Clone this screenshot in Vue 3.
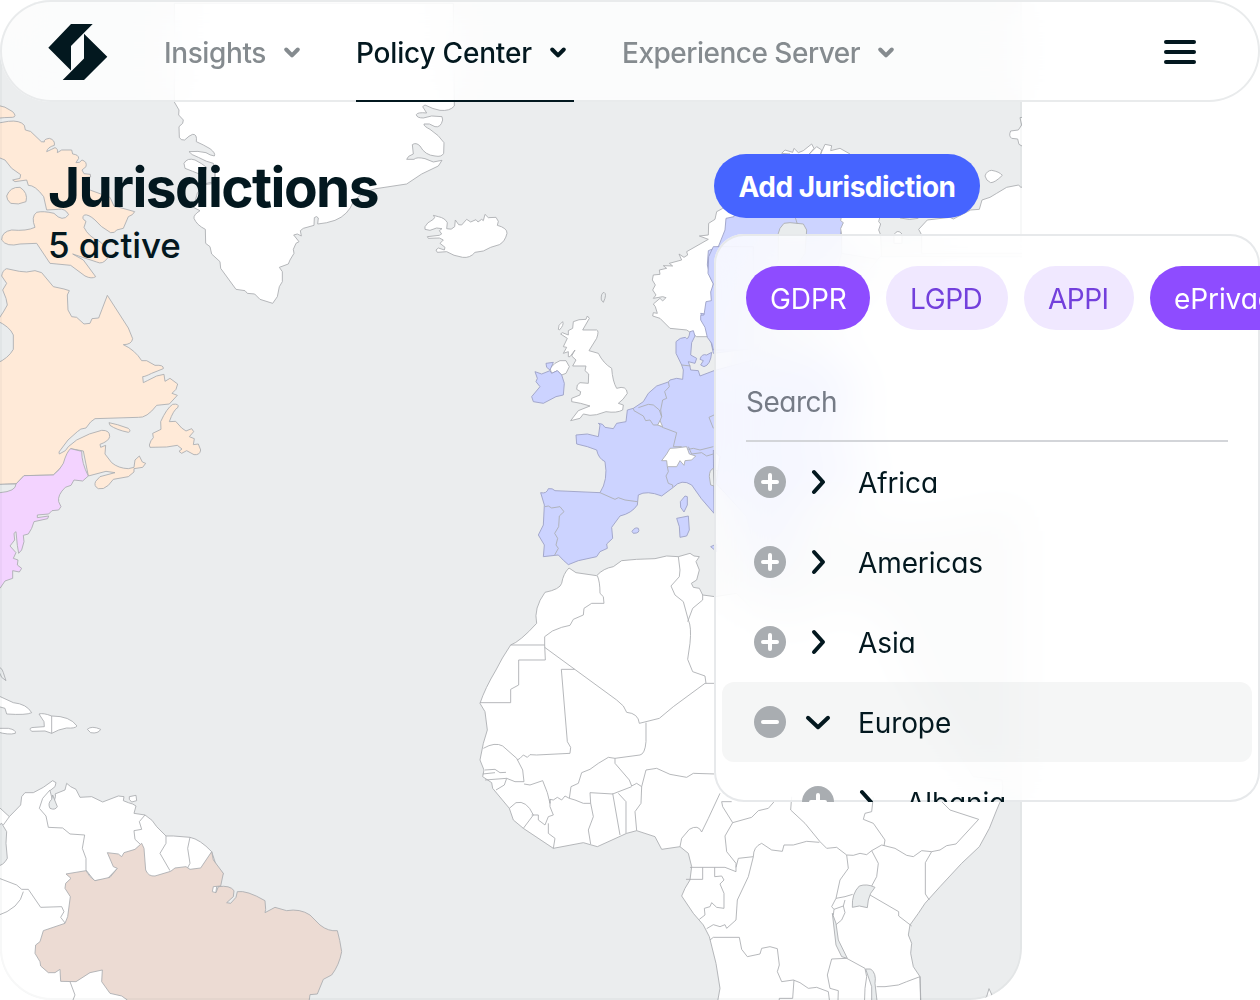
<script setup>
const navItems = [
  { label: 'Insights', key: 'insights' },
  { label: 'Policy Center', key: 'policy', active: true },
  { label: 'Experience Server', key: 'experience' },
]

const tags = [
  { label: 'GDPR', key: 'gdpr', selected: true },
  { label: 'LGPD', key: 'lgpd' },
  { label: 'APPI', key: 'appi' },
  { label: 'ePrivacy', key: 'eprivacy', selected: true },
]

const regions = [
  { label: 'Africa' },
  { label: 'Americas' },
  { label: 'Asia' },
  { label: 'Europe', open: true },
  { label: 'Albania', nested: true },
]

// Map sheets: each has its own origin and is drawn at three units per pixel.
const sheets = [
  {
    key: 'greenland', x: 160, y: 100,
    shapes: [
      ['land', 'M43 -50V6L57 30 56 45 70 60 68 70 57 80 58 112Q62 122 74 120Q88 106 98 103Q112 102 109 125Q130 134 150 146Q168 160 163 168Q150 166 138 158Q115 152 87 155Q92 164 115 172Q140 186 160 190L165 205V245L130 252 112 280 100 322 120 332Q100 345 102 355Q110 375 136 388L137 430 150 440 155 462 180 485 182 505 228 568 255 572 262 580 284 582 300 598 338 610 352 590 358 560 367 545 367 515 358 502 385 492 390 480 402 460 400 448 408 430 417 425 401 405 412 402 424 408 421 392 430 385 462 376 463 353Q470 346 475 354L473 372Q500 370 525 361Q565 345 580 305Q605 275 648 266L740 252 785 222 835 198 846 181 820 186 795 176Q770 170 762 178L740 178Q742 168 760 162L757 134Q768 126 780 138Q795 166 825 168Q845 172 851 160L852 128Q838 106 810 88Q790 78 792 72Q808 68 825 80Q842 84 848 60L846 50 815 48 790 54Q770 54 769 44Q772 36 800 39L788 20 795 15Q820 28 840 31Q870 34 883 18L880 -290H43Z'],
      ['land', 'M72 190Q82 172 105 180Q125 190 140 202Q135 224 118 222Q98 214 75 205Z'],
      ['line', 'M165 205V250L130 254'],
      ['land', 'M795 380Q800 368 820 358Q828 352 820 346L835 350Q855 354 862 368L860 386Q875 392 884 380L886 360 896 374 905 375 920 358 932 366 948 359 954 366 965 358 970 362 975 343 985 353 1008 352 1015 364 1012 376Q1042 384 1041 400Q1035 425 1018 434L992 442 970 453 945 457Q930 475 908 472Q880 468 860 455L832 457 828 450 835 444 853 450 855 442 840 430 850 420 838 414 805 415 802 410 838 406 845 402 838 392 846 386 830 384 810 391 795 388Z'],
    ],
  },
  {
    key: 'arctic', x: 0, y: 0,
    shapes: [
      ['canada', 'M-10 315Q15 318 38 335Q52 350 38 352Q15 352 -10 355Z'],
      ['canada', 'M-10 370L25 364Q60 360 73 376L76 390Q95 392 102 404L124 425 133 426Q130 418 148 415Q166 420 163 436Q142 442 140 455Q155 448 165 443Q175 446 172 458L185 450 215 450 218 462Q236 464 236 475L228 488Q240 490 246 480Q262 485 258 500L246 510 252 521 271 523 272 531 250 533 248 562 330 592 342 618 372 626 404 635Q400 645 385 650L370 685 350 690Q345 700 332 698Q300 680 285 660Q265 642 253 645Q242 655 258 664L252 682Q265 710 300 725Q320 740 322 775Q308 795 290 786L218 762 250 780 287 830Q275 838 255 828L212 796 150 790 110 730 60 732Q20 742 5 720Q5 695 35 690Q80 694 105 682Q92 650 110 637Q130 632 162 640Q188 668 206 644Q195 624 175 628L140 630 131 590Q105 555 85 556L80 540 45 545 38 540 60 535 62 524 35 505 15 480 -10 470Z'],
      ['canada', 'M20 588Q30 560 60 562Q85 578 78 605Q55 616 32 610Q20 600 20 588Z'],
    ],
  },
  {
    key: 'north-america', x: 0, y: 250,
    shapes: [
      ['canada', 'M-10 208L-6 210 10 186 22 165 18 145 8 120 20 100 5 78Q8 60 20 56L58 64 80 66 105 62 125 68 160 110 192 117 208 122 202 135 204 180 215 200 230 202 252 222 270 220 276 206 296 204 306 178 322 136 385 234 398 266Q395 284 370 284Q405 300 425 332L440 332 465 346Q492 344 490 356Q475 362 455 370Q435 380 428 380L430 398 442 392 470 378 492 373 495 394 510 385 533 402 528 418 516 430 532 436 508 462 470 466Q440 505 415 502L285 506Q272 512 258 534Q240 535 232 545L204 570 177 606 178 612 196 602 205 590 230 570Q270 548 305 541Q330 540 329 560Q326 574 300 583L302 592 317 586 315 612 335 638Q355 655 385 656L402 652 405 630 418 618 427 636 437 640 428 652 402 656 402 666 385 680 340 688 325 706Q310 720 295 716Q280 708 287 694L300 680 345 668 318 664 265 678 250 603 212 596 190 645 160 675 72 677 48 702 -10 704Z'],
      ['canada', 'M327 518Q350 522 385 535Q395 544 385 547Q350 540 330 526Z'],
      ['canada', 'M448 585Q452 570 460 563L458 550 483 538 482 515Q500 475 518 463Q538 460 534 472Q520 480 508 515L527 514 545 534 558 543 575 536 581 545 568 560 583 566 580 584 595 582 602 600Q600 616 582 614L560 602 545 610 537 604 546 597 532 586 500 591 450 592Z'],
      ['sea', 'M-10 212Q30 230 40 255L40 298Q25 325 -10 340Z'],
      ['usa', 'M-10 704L48 702 72 677 160 675Q180 660 190 640Q200 605 212 596L245 604Q245 640 265 678L248 693 222 690 213 706 196 712Q172 735 176 755L183 770 176 780 156 782 146 792 112 795 112 803 146 798 143 806 102 815 95 835 85 852 70 856 72 875 65 900 56 910 52 886 48 845 42 850 44 870 30 888 48 908 40 925 54 930 52 945 65 955 58 966 38 962 38 985 15 993 0 1015 -10 1020Z'],
      ['sea', 'M-10 703L48 702Q48 724 0 728H-10Z'],
    ],
  },
  {
    key: 'scandinavia', x: 420, y: 0,
    shapes: [
      ['land', 'M700 895L708 885 698 870 706 855 697 840 700 825 720 823 718 810 740 805 730 797 758 798 748 790 785 780 777 762 792 772 803 765 800 755 865 718 838 708 865 705 866 670 885 658 890 635 905 627 1080 480 1110 462 1085 460 1095 450 1118 457 1122 445 1135 458 1150 452 1175 432 1182 445 1168 462 1190 440 1205 450 1202 462 1215 433 1235 437 1232 452 1260 445 1290 462 1420 600 1190 800 880 1010 830 1010 800 990 750 985 720 955 698 948 700 938 712 940 706 920 700 912 720 895 728 903 738 893 728 890Z'],
      ['eu', 'M942 650L918 655 915 690 895 740 865 752 862 795 872 835 880 850 877 900 866 918 856 942 842 940 868 1000 880 1060 960 1050 1010 1000 1110 860 1240 850 1270 740 1262 700 1272 670 1262 650 1250 560 1000 560Z'],
      ['sea', 'M1075 700L1080 685 1092 670 1110 668 1150 672 1160 690 1155 760 1080 870 1030 990 1010 1060 960 1030 990 910 1075 780Z'],
      ['line', 'M1125 650L1132 672'],
    ],
  },
  {
    key: 'north-east', x: 840, y: 0,
    shapes: [
      ['land', 'M4 650L2 662 10 668 2 686 5 705V760L125 780 122 705 116 690 122 672 116 665 120 650Z'],
      ['land', 'M340 657L330 652 262 660 236 688 245 705V760H600V550L542 562 536 555 500 562 470 580 450 592 426 600 418 628 392 630Z'],
      ['line', 'M180 654Q210 662 235 655'],
      ['land', 'M162 704Q173 686 186 702V730H162Z'],
      ['land', 'M435 528Q440 512 455 511Q478 515 487 526Q465 548 452 548Q438 542 435 528Z'],
      ['land', 'M600 345L540 353 545 375 535 390 512 393Q505 408 515 415L533 417 537 433 546 438 600 440Z'],
    ],
  },
  {
    key: 'europe', x: 500, y: 250,
    shapes: [
      // continental mass continuing east under the dropdown
      ['land', 'M642 365L760 350 860 320 1000 200 1140 20 1600 20 1600 750 1380 820 1150 840 1000 780 820 700 642 660Z'],
      ['eu', 'M122 728Q140 732 145 716Q158 714 165 722L300 728Q325 690 315 635Q295 625 290 600L262 590 230 582 228 555 262 552 295 560 300 525 295 520Q310 520 315 532L340 536 350 520 378 515 382 480 400 475 430 455 445 430 470 408 505 396 510 390 530 385 548 388 550 360 545 345 528 310 528 275Q540 262 556 262 565 275 570 245L580 242 585 258 575 278 572 315 590 325 585 340 565 335 570 350 572 360 595 362 600 378 642 362 760 330 980 300 1080 420 1050 520 900 560 880 600 1060 590 1110 700 900 740 850 900 870 990 780 970 740 800 648 700 660 620 640 600 642 790Q600 745 575 705Q545 685 520 712L485 738Q440 720 415 735L412 765Q395 790 360 798L335 832 338 865 320 882 322 895 300 905 290 920 235 932 205 944Q190 932 175 915L130 920 133 885 115 855 130 825 133 765Z'],
      ['eu', 'M602 196L612 195 618 155 634 152 632 126 640 102 624 70 626 20 640 -10H760V300L640 300 635 280 622 262 615 232 602 210Z'],
      ['line', 'M135 770Q145 764 155 774L180 770 192 785 178 798 176 830 164 850 173 865 168 885 175 895 164 915M300 728L345 748 355 743 375 750 412 755M400 475L402 482 430 498 437 512 450 510 460 525 475 525 485 500 478 480 460 465 445 463 415 473M485 500L482 480 488 450 500 445 494 425 508 410 505 396M475 525L490 533 530 548 520 590M545 345L572 348M502 650L505 665 498 678 505 700 518 705 518 712M520 590Q530 590 545 590M565 590L575 612 605 608 620 618 640 612M565 598L580 595 600 600 640 590M642 495L627 502 640 535'],
      ['land', 'M485 632L500 612 510 595 528 594 560 590 568 612 587 618 575 630 555 632 552 646 540 632 530 650 502 650 500 632Z'],
      ['land', 'M473 525L480 512 488 530Z'],
      ['sea', 'M640 655Q628 660 628 680L632 705 642 708Z'],
      ['eu', 'M600 328Q605 310 620 315L635 307Q632 345 612 350L602 345 610 332Z'],
      ['eu', 'M541 755L555 738 562 740 562 765 552 786 542 772Z'],
      ['eu', 'M530 805L565 798 568 840 560 858 540 862 538 830Z'],
      ['eu', 'M396 844Q405 830 415 835Q422 850 400 850Z'],
      ['eu', 'M632 890L650 882V905Z'],
      ['land', 'M220 215Q235 207 258 208L262 198 268 205 248 240 290 240Q298 242 290 265L267 302 295 310Q310 340 335 355Q338 395 350 415Q380 405 382 430Q370 450 355 460L370 465 368 480Q350 490 318 485L290 494 270 496 250 492 240 505 212 512 235 482 270 468 242 460 215 455 215 445 240 435 242 425 230 418 232 405 240 398 265 400 266 372 255 362 258 348 218 348 228 330 215 318 225 300 210 320 205 320 205 305 190 310 200 292 190 290 202 265 182 252 187 248 205 255 205 242 218 235Z'],
      ['land', 'M175 238Q173 225 188 215Q193 225 178 240Z'],
      ['sea', 'M304 150Q302 130 312 127Q322 132 310 157Z'],
      ['land', 'M150 355L165 340 180 332 198 332 208 350 198 370 185 375 172 362 155 370Z'],
      ['eu', 'M105 365L125 372 150 362 155 370 172 362 185 375 193 400 190 435 168 440 130 460 100 455 95 440 120 410 108 395 112 385Z'],
      ['eu', 'M138 340L160 337 150 360 140 352Z'],
    ],
  },
  {
    key: 'south-america', x: 0, y: 640,
    shapes: [
      ['sea', 'M-10 80Q5 80 10 98L18 122 5 112Z'],
      ['land', 'M-10 165L40 188Q80 192 95 218Q80 226 20 222L15 205 -10 198Z'],
      ['land', 'M-10 265L25 265Q50 270 46 280Q25 286 -10 275Z'],
      ['land', 'M117 222Q130 218 155 228Q210 228 231 258Q225 266 200 264Q175 268 155 280L135 273 95 274Q82 262 105 262L133 260 132 245Z'],
      ['line', 'M155 228V280'],
      ['land', 'M262 268Q275 256 302 268Q295 282 272 278Z'],
      ['land', 'M-10 495L28 530 62 495 65 470 75 458 100 458 130 442 158 422 168 428 165 440 150 452Q155 470 160 490Q170 465 165 462L195 450 200 430 212 440 228 448 240 472 275 470 308 486 355 468 372 470 370 482 385 488 398 492 408 498 402 520 435 525Q460 540 470 560L498 588 520 588 570 592Q600 598 635 635L650 680 670 700 650 740 600 1100H-10Z'],
      ['land', 'M388 470L408 466 410 482 395 486 388 478Z'],
      ['sea', 'M-10 560L5 550 20 575 18 610 22 655Q10 678 -10 678Z'],
      ['sea', 'M158 465Q168 490 172 500Q165 512 150 505Q142 490 155 478Z'],
      ['line', 'M150 450L128 475 118 505 138 528 145 562 188 564 210 582 254 585 247 625 258 655 258 690 283 722 320 718 352 685M435 525L418 545 425 568 402 572 405 598 420 612M498 588L498 610 480 640 510 692M570 592L563 625 570 670 562 685M-10 712L50 735 65 748 85 748 122 802 185 800 192 815 182 832 196 850M70 755Q60 805 -10 828M10 555L28 530M210 1025L225 1065 215 1090'],
      ['brazil', 'M198 702L258 692Q268 712 285 722L330 712 352 685 340 680 322 638 355 642 365 650 372 638 405 628 425 610 432 625 437 690Q445 710 465 708L512 694 525 684 558 680 570 688 602 684 635 635 640 660 670 700 662 738 640 740 637 755 648 758 655 740Q690 735 702 752L700 770 680 788 692 790 708 772 712 755Q740 750 795 782L797 808 795 818 825 802 860 812Q900 805 930 825L960 855Q985 875 1012 872Q1020 900 1025 935Q1018 975 995 1005L970 1018 952 1062 930 1064 925 1100H380L382 1080 365 1068 330 1060 305 1025 307 990 270 998 228 1025 182 1024 180 988 165 998 145 998 122 978 120 965 105 940 107 915 120 905 130 872 195 850 203 830 211 770 195 745 197 730 213 715Z'],
    ],
  },
  {
    key: 'africa', x: 470, y: 540,
    shapes: [
      ['land', 'M297 84L318 98 380 107Q400 85 430 80L455 62 500 58 555 56 590 48 625 50 660 40 672 48 688 50 678 65 688 90 680 120 664 130 670 142 688 145 698 165 735 170 800 160 860 220 1000 270 1030 190 1110 180 1200 215 1260 220 1290 350 1370 500 1460 630 1510 710 1596 720Q1605 760 1580 810L1558 865 1528 920 1475 970 1410 1040 1365 1090 1345 1120 1320 1155 1315 1185 1325 1210 1322 1240 1330 1280 1350 1310 1353 1400H740L750 1345 738 1270 718 1190 700 1155 670 1120 635 1068 645 1045 660 1020 665 980 655 940 630 920 575 928 555 890 500 872 470 880 382 920 340 908 250 925 160 865 130 840 118 805 68 745 65 728 38 710 42 690 30 660 40 610 52 570 45 515 30 490Q45 445 78 390Q95 355 122 315Q150 305 200 250Q190 205 225 157Q270 148 275 130Q280 100 297 84Z'],
      ['line', 'M122 315H224V290Q245 270 275 262L300 256 310 238 340 225 342 205 365 190 402 190 400 170 390 160Q390 125 382 107M224 315L226 360H146V435L122 448V488H30M224 322L440 480 460 498 470 517Q505 520 508 550L568 535 610 500 705 430 735 430M314 388H274L292 605 302 622 300 640 200 645 180 644 172 652 160 645 150 655 142 660M625 50L630 90 628 110 603 138 615 165 640 185 655 240Q665 260 660 310L653 358 668 395 705 408 708 430M698 165L698 180 668 205 653 245M528 548V605Q525 642 510 645L435 655 415 652 385 670 360 688 335 698 325 730 303 740 298 775 285 768 275 780 262 772 250 780 240 778 240 800 250 825 235 830 225 855 205 840 205 825 185 825M435 655L435 670 478 720 485 738 500 730 515 740 528 690 560 685 600 703 650 712 670 700 735 702M515 740L513 790 495 815 500 872M160 865L190 825Q170 780 138 788L118 805M40 625Q75 605 98 618L140 655 158 690 162 725 135 725 110 715 45 720M162 732L180 735 218 722 232 758 240 790 240 778M45 690L75 688 90 698 108 697M38 702L75 698M110 715L103 735 78 750M298 775L315 780 340 790 362 790 370 830 355 870 362 912M362 790L360 758 428 762 485 740M428 760L450 885M445 760L468 785 468 880M235 850L235 880 255 895 250 925'],
    ],
  },
  {
    key: 'central-africa', x: 660, y: 780,
    shapes: [
      ['line', 'M60 200L65 175 88 148Q115 132 125 156L145 115 180 40M215 65H185L188 80 218 128 195 168 200 215 228 250 228 275 195 262H90M218 128L275 112 295 92 325 85 345 62M395 50L392 90 435 130 480 185 500 205 530 202 560 225 580 226 600 220 620 224 635 212 665 195 705 205 740 226 760 230 785 212 815 215 840 210 860 197 888 192 956 118 870 90 840 60M280 230Q280 200 305 190L335 210 367 214 372 195 400 195 440 184 478 187M640 50L635 95 615 100 610 118 640 130 675 180 672 198M78 298H128V262M164 262V290L185 288 192 300 180 312 192 340 192 385 170 382 155 368 150 380 133 385 135 405 118 418M280 230L235 235 228 262M280 230L265 290 232 360 228 420 200 445 195 434 180 440 160 434 140 446M150 480L160 472H238L245 508 262 530 300 522 305 505 330 500 352 506 358 555 352 575 365 605 400 600 420 608 445 625 470 622 505 635 512 690M402 600L398 655 358 655 355 690M560 225L565 265 540 300 528 355 555 350 578 343M635 212L655 250 650 290 635 318M815 215L796 248V342L808 360M630 345L716 395V408L755 438M528 355L515 380 522 388 550 378 555 360M522 388L520 405M550 378L555 398 545 420 528 434M560 535L515 537 502 585 510 625 535 632 533 690M560 535L615 565 620 590 615 625 613 680M650 620L675 620 715 615 740 605 780 590 782 680'],
      ['sea', 'M598 318Q620 310 645 322L632 340 625 360 622 383 598 378 577 382Q575 340 598 318Z'],
      ['sea', 'M517 400L528 430 535 480 562 535 545 530 528 495Z'],
      ['sea', 'M617 567H632Q650 580 645 610L653 680 635 690 635 620Z'],
      ['land', 'M968 665L980 650 987 626 998 650 980 680Z'],
    ],
  },
]
</script>

<template>
  <main class="screen">
    <svg class="map" viewBox="0 0 1022 1000" aria-hidden="true">
      <g v-for="s in sheets" :key="s.key" :transform="`translate(${s.x} ${s.y}) scale(.333333)`">
        <path v-for="(shape, i) in s.shapes" :key="i" :class="shape[0]" :d="shape[1]" />
      </g>
      <rect class="frame" x="1" y="-60" width="1020" height="1059" rx="51" />
    </svg>

    <nav class="nav">
      <svg class="logo" viewBox="0 0 60 56">
        <path d="M.3 23.7 23 0h21.7L23 22v24.4zM36 9.7l23.3 23L36 56H14.7L36 34.4z" />
      </svg>
      <a v-for="n in navItems" :key="n.key" class="nav-item" :class="[n.key, { active: n.active }]">
        <span>{{ n.label }}</span>
        <svg class="caret" viewBox="0 0 32 32"><path d="m10.2 13.5 5.8 5.8 5.8-5.8" /></svg>
      </a>
      <button class="burger" aria-label="Menu"><i /><i /><i /></button>
    </nav>

    <header class="heading">
      <div>
        <h1>Jurisdictions</h1>
        <p>5 active</p>
      </div>
      <button class="add">Add Jurisdiction</button>
    </header>

    <section class="panel">
      <div class="tags">
        <span v-for="t in tags" :key="t.key" class="tag" :class="[t.key, { selected: t.selected }]">{{ t.label }}</span>
      </div>
      <div class="search">Search</div>
      <ul class="regions">
        <li v-for="r in regions" :key="r.label" :class="{ open: r.open, nested: r.nested }">
          <svg class="toggle" viewBox="0 0 32 32">
            <circle cx="16" cy="16" r="16" />
            <path :d="r.open ? 'M9 16h14' : 'M9 16h14M16 9v14'" />
          </svg>
          <svg class="chevron" viewBox="0 0 32 32">
            <path :d="r.open ? 'm6 11.8 10 9.4 10-9.4' : 'm12 6 9 10-9 10'" />
          </svg>
          <span>{{ r.label }}</span>
        </li>
      </ul>
    </section>
  </main>
</template>

<style>
body {
  background: #fff;
}
</style>

<style scoped>
.screen {
  position: relative;
  width: 1260px;
  height: 1000px;
  overflow: hidden;
  background: #fff;
  color: #03181f;
  font-family: Inter, 'Liberation Sans', sans-serif;
  font-feature-settings: 'cv11';
  font-size: 28px;
  letter-spacing: -.1px;
}
.map {
  position: absolute;
  top: 0;
  left: 0;
  width: 1022px;
  height: 1000px;
  border-radius: 52px 0 52px 52px;
  background: #ebedee;
}
.map path {
  stroke: #aaadb0;
  stroke-width: 2.6;
  stroke-linejoin: round;
}
.map .frame {
  fill: none;
  stroke: rgba(3, 24, 31, .03);
  stroke-width: 2;
}
.land { fill: #fff; }
.sea { fill: #e9eced; }
.line { fill: none; }
.canada { fill: #ffead8; }
.usa { fill: #f3d3ff; }
.brazil { fill: #ecdbd3; }
.map .eu { fill: #ccd3ff; stroke: #9a9fc4; }

.nav {
  position: relative;
  display: flex;
  align-items: center;
  box-sizing: border-box;
  height: 102px;
  padding-left: 48px;
  padding-right: 64px;
  border-radius: 51px;
  background: rgba(255, 255, 255, .8);
  box-shadow: inset 0 0 0 2px #e9ebec;
  backdrop-filter: blur(24px);
}
.logo {
  width: 60px;
  height: 56px;
  margin-right: 56px;
  margin-top: 2px;
  fill: #03181f;
}
.nav-item {
  display: flex;
  align-items: center;
  justify-content: space-between;
  box-sizing: border-box;
  height: 102px;
  margin-right: 48px;
  padding-top: 2px;
  color: #858b8f;
  font-weight: 500;
  white-space: nowrap;
}
.nav-item span { padding-top: 1px; }
.nav-item.active {
  color: #03181f;
  box-shadow: inset 0 -2px #03181f;
}
.insights { width: 144px; letter-spacing: -.4px; }
.policy { width: 218px; letter-spacing: -.2px; }
.experience { width: 280px; letter-spacing: -.5px; }
.caret {
  width: 32px;
  height: 32px;
  flex: none;
}
.caret path,
.chevron path {
  fill: none;
  stroke: currentColor;
  stroke-width: 4;
  stroke-linecap: round;
  stroke-linejoin: round;
}
button {
  border: 0;
  font: inherit;
}
.burger {
  display: flex;
  flex-direction: column;
  gap: 6px;
  width: 32px;
  margin-left: auto;
  padding: 2px 0 0;
  background: none;
}
.burger i {
  height: 4px;
  border-radius: 2px;
  background: #03181f;
}

.heading {
  position: relative;
  display: flex;
  justify-content: space-between;
  align-items: flex-start;
  width: 932px;
  padding: 52px 0 0 48px;
}
h1 {
  margin: 0;
  font-size: 55px;
  line-height: 67px;
  font-weight: 700;
  letter-spacing: -1.6px;
}
.heading p {
  margin: 2px 0 0;
  font-size: 35px;
  line-height: 44px;
  font-weight: 500;
}
.add {
  width: 266px;
  height: 64px;
  padding: 1px 0 0;
  border-radius: 32px;
  background: #4664ff;
  color: #fff;
  font-weight: 700;
  letter-spacing: -.5px;
  white-space: nowrap;
}

.panel {
  position: absolute;
  left: 714px;
  top: 234px;
  width: 546px;
  height: 568px;
  box-sizing: border-box;
  padding: 32px 8px 0;
  overflow: hidden;
  border-radius: 30px;
  background: rgba(255, 255, 255, .8);
  box-shadow: inset 0 0 0 2px #e7e9eb;
  backdrop-filter: blur(24px);
}
.tags {
  display: flex;
  gap: 16px;
  width: 560px;
  padding-left: 24px;
}
.tag {
  display: flex;
  flex: none;
  align-items: center;
  box-sizing: border-box;
  height: 64px;
  padding: 1px 0 0 24px;
  border-radius: 32px;
  background: #f0e8ff;
  color: #7340dc;
}
.tag.selected {
  background: #8e4cff;
  color: #fff;
}
.gdpr { width: 124px; }
.lgpd { width: 122px; letter-spacing: -.4px; }
.appi { width: 110px; letter-spacing: -.5px; }
.eprivacy { width: 158px; }
.search {
  box-sizing: border-box;
  height: 112px;
  margin: 0 24px;
  padding-top: 56px;
  border-bottom: 2px solid #d3d5d9;
  line-height: 33px;
  letter-spacing: -.5px;
  color: #757b86;
}
.regions {
  margin: 0;
  padding: 0;
  list-style: none;
}
.regions li {
  display: flex;
  align-items: center;
  height: 80px;
  padding-left: 32px;
  border-radius: 12px;
}
.regions li span { padding-top: 1px; }
.regions li.open { background: rgba(10, 15, 30, .04); }
.regions li.nested { padding-left: 80px; }
.toggle {
  width: 32px;
  height: 32px;
  margin-right: 16px;
}
.toggle circle { fill: #a9adb1; }
.toggle path {
  stroke: #fff;
  stroke-width: 4;
  stroke-linecap: round;
}
.chevron {
  width: 32px;
  height: 32px;
  margin-right: 24px;
}
</style>
